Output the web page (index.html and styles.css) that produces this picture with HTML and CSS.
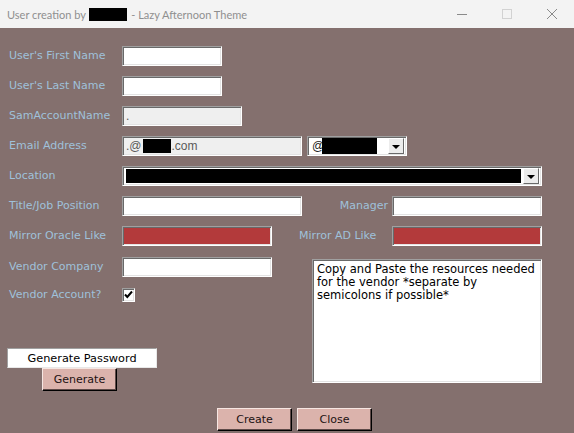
FILE: index.html
```html
<!DOCTYPE html>
<html>
<head>
<meta charset="utf-8">
<link rel="stylesheet" href="styles.css">
</head>
<body>
<div class="window">
  <div class="titlebar">
    <div class="title">User creation by <span class="redact title-redact"></span> - Lazy Afternoon Theme</div>
    <div class="controls">
      <div class="ctl"><svg width="10" height="10" viewBox="0 0 10 10"><path d="M0 5.5H10" stroke="#8a8a8a" stroke-width="1"/></svg></div>
      <div class="ctl"><svg width="10" height="10" viewBox="0 0 10 10"><rect x="0.5" y="0.5" width="9" height="9" fill="none" stroke="#d2d2d2" stroke-width="1"/></svg></div>
      <div class="ctl"><svg width="10" height="10" viewBox="0 0 10 10"><path d="M0 0L10 10M10 0L0 10" stroke="#8a8a8a" stroke-width="1"/></svg></div>
    </div>
  </div>
  <div class="form">
    <div class="rows">
      <div class="row">
        <span class="lbl">User's First Name</span>
        <div class="field w100"></div>
      </div>
      <div class="row">
        <span class="lbl">User's Last Name</span>
        <div class="field w100"></div>
      </div>
      <div class="row">
        <span class="lbl">SamAccountName</span>
        <div class="field w120 ro">.</div>
      </div>
      <div class="row">
        <span class="lbl">Email Address</span>
        <div class="field w180 ro">.@<span class="redact mail-redact"></span>.com</div>
        <div class="combo w100 ml5">
          <span class="at">@</span><span class="redact domain-redact"></span>
          <span class="ddbtn"><span class="tri"></span></span>
        </div>
      </div>
      <div class="row">
        <span class="lbl">Location</span>
        <div class="combo w420">
          <span class="redact loc-redact"></span>
          <span class="ddbtn"><span class="tri"></span></span>
        </div>
      </div>
      <div class="row">
        <span class="lbl">Title/Job Position</span>
        <div class="field w180"></div>
        <span class="lbl mgr">Manager</span>
        <div class="field w150"></div>
      </div>
      <div class="row">
        <span class="lbl">Mirror Oracle Like</span>
        <div class="field w150 red"></div>
        <span class="lbl adlike">Mirror AD Like</span>
        <div class="field w150 red"></div>
      </div>
    </div>
    <div class="lower">
      <div class="left">
        <div class="row">
          <span class="lbl">Vendor Company</span>
          <div class="field w150"></div>
        </div>
        <div class="row chkrow">
          <span class="lbl">Vendor Account?</span>
          <span class="check"><svg width="9" height="9" viewBox="0 0 9 9"><path d="M1 4.5L3.3 7L8 1.5" fill="none" stroke="#000" stroke-width="2"/></svg></span>
        </div>
        <div class="genpw">Generate Password</div>
        <button class="btn gen">Generate</button>
      </div>
      <div class="notes">Copy and Paste the resources needed<br>for the vendor *separate by<br>semicolons if possible*</div>
    </div>
    <div class="footer">
      <button class="btn">Create</button>
      <button class="btn">Close</button>
    </div>
  </div>
</div>
</body>
</html>
```
FILE: styles.css
```css
* { box-sizing: border-box; }
html, body { margin: 0; padding: 0; }
body {
  width: 574px;
  height: 433px;
  overflow: hidden;
  background: #84706e;
  font-family: "DejaVu Sans", sans-serif;
  font-size: 11px;
}
.window { width: 574px; height: 433px; }
.titlebar {
  height: 28px;
  background: #f3f3f3;
  display: flex;
  align-items: center;
  justify-content: space-between;
}
.title {
  padding-left: 7px;
  font-family: Lato, "Liberation Sans", sans-serif;
  font-size: 11px;
  color: #8f8f8f;
  display: flex;
  align-items: center;
  white-space: pre;
}
.title-redact { width: 38px; height: 13px; margin: 0 1px 0 1px; }
.redact { display: inline-block; background: #000; }
.controls { display: flex; height: 28px; }
.ctl { width: 45px; display: flex; align-items: center; justify-content: center; }
.ctl svg { display: block; }

.form { padding: 18px 0 0 7px; }
.rows { display: flex; flex-direction: column; gap: 10px; }
.row { display: flex; align-items: center; height: 20px; }
.lbl {
  width: 115px;
  padding-left: 2px;
  padding-bottom: 1px;
  color: #9fc1da;
  white-space: nowrap;
  flex: none;
}
.mgr { width: 90px; text-align: right; padding-right: 4px; }
.adlike { width: 120px; padding-left: 27px; }

.field {
  height: 20px;
  background: #fff;
  border: 1px solid;
  border-color: #a0a0a0 #fff #fff #a0a0a0;
  box-shadow: inset 1px 1px #696969, inset -1px -1px #e3e3e3;
  flex: none;
  font-family: "Liberation Sans", sans-serif;
  font-size: 12px;
  color: #5a5a5a;
  padding: 0 3px;
  display: flex;
  align-items: center;
}
.ro { background: #efefef; }
.red { background: #b33a3b; }
.w100 { width: 100px; }
.w120 { width: 120px; }
.w150 { width: 150px; }
.w180 { width: 180px; }
.w420 { width: 420px; }
.ml5 { margin-left: 5px; }
.mail-redact { width: 28px; height: 14px; margin: 0 1px; }

.combo {
  height: 20px;
  background: #fff;
  border: 1px solid;
  border-color: #a0a0a0 #fff #fff #a0a0a0;
  box-shadow: inset 1px 1px #696969, inset -1px -1px #e3e3e3;
  display: flex;
  align-items: center;
  padding: 2px 2px 2px 2px;
  flex: none;
}
.at {
  font-family: "Liberation Sans", sans-serif;
  font-size: 12px;
  color: #222;
  padding-left: 2px;
  width: 11px;
}
.domain-redact { width: 55px; height: 16px; margin-left: 1px; }
.loc-redact { flex: 1; height: 14px; margin: 0 2px 0 1px; }
.ddbtn {
  margin-left: auto;
  width: 16px;
  height: 16px;
  background: #ececec;
  border: 1px solid;
  border-color: #fff #696969 #696969 #fff;
  display: flex;
  align-items: center;
  justify-content: center;
}
.tri {
  width: 0; height: 0;
  border-left: 4px solid transparent;
  border-right: 4px solid transparent;
  border-top: 4px solid #000;
  margin-top: 1px;
}

.lower { display: flex; margin-top: 11px; }
.left { width: 305px; display: flex; flex-direction: column; align-items: flex-start; }
.chkrow { height: 13px; margin-top: 11px; }
.check {
  width: 13px; height: 14px;
  background: #fff;
  border: 1px solid;
  border-color: #a0a0a0 #fff #fff #a0a0a0;
  box-shadow: inset 1px 1px #696969, inset -1px -1px #e3e3e3;
  display: flex; align-items: center; justify-content: center;
}
.check svg { display: block; }
.genpw {
  margin-top: 47px;
  width: 150px;
  height: 20px;
  background: #fff;
  border: 1px solid;
  border-color: #a0a0a0 #e8e8e8 #e8e8e8 #a0a0a0;
  display: flex; align-items: center; justify-content: center;
  color: #000;
  font-size: 11.3px;
}
.btn {
  width: 75px;
  height: 23px;
  background: #dbb3ac;
  border: 1px solid;
  border-color: #f6e6e2 #000 #000 #f6e6e2;
  box-shadow: inset -1px -1px #5e4a48;
  font-family: "DejaVu Sans", sans-serif;
  font-size: 11px;
  color: #1d1212;
  padding: 0;
  margin: 0;
}
.gen { margin-left: 35px; }
.notes {
  margin-top: 2px;
  width: 230px;
  height: 124px;
  background: #fff;
  border: 1px solid;
  border-color: #a0a0a0 #fff #fff #a0a0a0;
  box-shadow: inset 1px 1px #696969, inset -1px -1px #e3e3e3;
  padding: 3px 4px;
  font-size: 11.5px;
  line-height: 13px;
  color: #000;
  white-space: nowrap;
}
.footer { display: flex; gap: 5px; margin-top: 17px; padding-left: 210px; }
```
